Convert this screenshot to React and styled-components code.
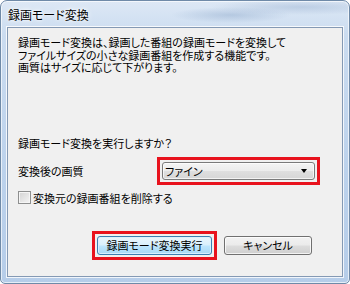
import React from 'react';
import styled, { createGlobalStyle } from 'styled-components';

const GlobalStyle = createGlobalStyle`
    html, body {
        margin: 0;
        padding: 0;
        background: #ffffff;
    }
    body {
        font-family: "Noto Sans CJK JP", "Noto Sans", sans-serif;
        font-size: 11px;
        color: #000;
    }
`;

const Window = styled.div`
    box-sizing: border-box;
    width: 350px;
    height: 284px;
    display: flex;
    flex-direction: column;
    padding: 0 6px 6px 6px;
    border: 1px solid #6f8aa8;
    border-radius: 7px 7px 5px 5px;
    background:
        radial-gradient(ellipse 60px 8px at 230px 14px, rgba(120, 150, 190, 0.35), transparent),
        radial-gradient(ellipse 90px 8px at 300px 6px, rgba(120, 150, 190, 0.3), transparent),
        linear-gradient(180deg, #dde8f5 0%, #cbdcf0 12%, #bcd2ec 60%, #b6cde9 100%);
    box-shadow: inset 0 0 0 1px rgba(255, 255, 255, 0.65);
`;

const TitleBar = styled.div`
    height: 26px;
    display: flex;
    align-items: center;
    padding-left: 1px;
`;

const Title = styled.span`
    font-size: 12px;
    font-feature-settings: "palt";
    color: #000;
    text-shadow: 0 0 6px #fff, 0 0 3px #fff;
`;

const Client = styled.div`
    flex: 1;
    display: flex;
    flex-direction: column;
    padding: 8px 10px 0 10px;
    background: #f0f0f0;
    border: 1px solid #8499b4;
    box-shadow: 0 0 0 1px rgba(255, 255, 255, 0.8);
    font-feature-settings: "palt";
`;

const Description = styled.p`
    margin: 0;
    line-height: 12.5px;
`;

const Question = styled.div`
    margin-top: 63px;
    line-height: 12px;
`;

const Row = styled.div`
    display: flex;
    align-items: center;
    margin-top: ${p => p.$top || 0}px;
`;

const Label = styled.span`
    width: 139px;
    line-height: 12px;
`;

const Highlight = styled.div`
    border: 3px solid #e8121d;
    padding: 2px;
    display: flex;
`;

const Combo = styled.div`
    box-sizing: border-box;
    width: 153px;
    height: 18px;
    display: flex;
    align-items: center;
    justify-content: space-between;
    padding: 0 7px 0 2px;
    border: 1px solid #7a7a7a;
    border-radius: 3px;
    background: linear-gradient(180deg, #f4f4f4 0%, #ececec 48%, #dfdfdf 52%, #d6d6d6 100%);
    box-shadow: inset 0 0 0 1px rgba(255, 255, 255, 0.7);
`;

const Arrow = styled.span`
    width: 0;
    height: 0;
    border-left: 3.5px solid transparent;
    border-right: 3.5px solid transparent;
    border-top: 4px solid #000;
`;

const Check = styled.span`
    box-sizing: border-box;
    width: 13px;
    height: 13px;
    margin-right: 2px;
    border: 1px solid #8e8f8f;
    background: linear-gradient(135deg, #d3d3d3, #f4f4f4);
    box-shadow: inset 0 0 0 1px #f5f5f5;
`;

const Buttons = styled.div`
    display: flex;
    align-items: center;
    margin-top: 25px;
    margin-left: 74px;
    gap: 7px;
`;

const Button = styled.button`
    box-sizing: border-box;
    width: ${p => p.$width}px;
    height: 19px;
    padding: 0;
    font: inherit;
    font-size: 11px;
    color: #000;
    border-radius: 3px;
    border: 1px solid ${p => (p.$primary ? '#3c7fb1' : '#707070')};
    background: ${p =>
        p.$primary
            ? 'linear-gradient(180deg, #eaf6fd 0%, #d9f0fc 48%, #bee6fd 52%, #a7d9f5 100%)'
            : 'linear-gradient(180deg, #f2f2f2 0%, #ebebeb 48%, #dddddd 52%, #cfcfcf 100%)'};
    box-shadow: inset 0 0 0 1px ${p => (p.$primary ? 'rgba(220, 240, 255, 0.9)' : 'rgba(255, 255, 255, 0.75)')};
    display: flex;
    align-items: center;
    justify-content: center;
    font-feature-settings: "palt";
`;

export default function App() {
    return (
        <>
            <GlobalStyle />
            <Window>
                <TitleBar>
                    <Title>録画モード変換</Title>
                </TitleBar>
                <Client>
                    <Description>
                        録画モード変換は、録画した番組の録画モードを変換して<br />
                        ファイルサイズの小さな録画番組を作成する機能です。<br />
                        画質はサイズに応じて下がります。
                    </Description>
                    <Question>録画モード変換を実行しますか？</Question>
                    <Row $top={8}>
                        <Label>変換後の画質</Label>
                        <Highlight>
                            <Combo>
                                <span>ファイン</span>
                                <Arrow />
                            </Combo>
                        </Highlight>
                    </Row>
                    <Row $top={5}>
                        <Check />
                        <span>変換元の録画番組を削除する</span>
                    </Row>
                    <Buttons>
                        <Highlight>
                            <Button $primary $width={115}>録画モード変換実行</Button>
                        </Highlight>
                        <Button $width={88}>キャンセル</Button>
                    </Buttons>
                </Client>
            </Window>
        </>
    );
}
